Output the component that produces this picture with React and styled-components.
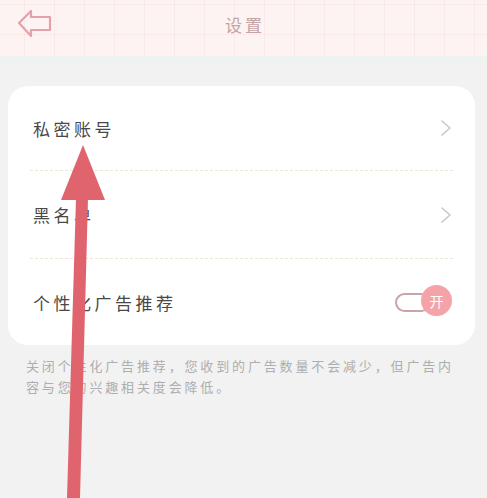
import React from "react";
import styled, { createGlobalStyle } from "styled-components";

const Global = createGlobalStyle`
  html, body { margin: 0; padding: 0; background: #f2f2f2; }
  body { font-family: "Noto Sans CJK SC", "Noto Sans", sans-serif; }
`;

const Page = styled.div`
  position: relative;
  width: 487px;
  height: 498px;
  overflow: hidden;
  background: #f2f2f2;
`;

const Header = styled.header`
  height: 56px;
  box-sizing: border-box;
  padding-bottom: 8px;
  display: grid;
  grid-template-columns: 60px 1fr 60px;
  align-items: center;
  background-color: #fdf3f2;
  background-image:
    linear-gradient(to right, rgba(240, 215, 212, 0.3) 1px, transparent 1px),
    linear-gradient(to bottom, rgba(240, 215, 212, 0.3) 1px, transparent 1px);
  background-size: 30px 30px;
  background-position: 24px 4px;
`;

const BackBtn = styled.div`
  display: flex;
  align-items: center;
  padding-left: 17px;
`;

const Title = styled.h1`
  margin: 0;
  text-align: center;
  font-size: 17px;
  font-weight: 400;
  letter-spacing: 3px;
  color: #c4a3a4;
  padding-left: 3px;
`;

const Strip = styled.div`
  height: 6px;
  background: #eff3f0;
`;

const Content = styled.main`
  padding: 24px 12px 0 8px;
`;

const Card = styled.section`
  background: #fff;
  border-radius: 20px;
  padding: 0 22px 0 22px;
`;

const Row = styled.div`
  height: ${(p) => p.$h}px;
  display: flex;
  align-items: center;
  justify-content: space-between;
  padding-left: 3px;
  border-bottom: ${(p) => (p.$last ? "none" : "1px dashed #efe6cf")};
`;

const Label = styled.span`
  font-size: 17px;
  letter-spacing: 3.5px;
  color: #484848;
`;

const Note = styled.p`
  margin: 10px 20px 0 18px;
  font-size: 13px;
  line-height: 21px;
  letter-spacing: 2.85px;
  color: #aeaeae;
`;

const Toggle = styled.div`
  position: relative;
  width: 58px;
  height: 30px;
  display: flex;
  align-items: center;
`;

const Track = styled.div`
  width: 36px;
  height: 19px;
  border: 2px solid #c9a4a8;
  border-radius: 12px;
  box-sizing: border-box;
`;

const Knob = styled.div`
  position: absolute;
  right: 1px;
  top: -2px;
  width: 31px;
  height: 31px;
  border-radius: 50%;
  background: #f4a4a8;
  color: #fff;
  font-size: 14px;
  display: flex;
  align-items: center;
  justify-content: center;
`;

const Overlay = styled.svg`
  position: absolute;
  left: 0;
  top: 0;
  pointer-events: none;
`;

const Chevron = () => (
  <svg width="14" height="18" viewBox="0 0 14 18">
    <path d="M3 2 L11 9 L3 16" fill="none" stroke="#c8c8c8" strokeWidth="1.6" strokeLinecap="round" strokeLinejoin="round" />
  </svg>
);

const BackIcon = () => (
  <svg width="36" height="30" viewBox="0 0 36 30">
    <path
      d="M2 14 L14 2 L14 8 L33 8 L33 21 L14 21 L14 27 Z"
      fill="none"
      stroke="#e2a2aa"
      strokeWidth="2.2"
      strokeLinejoin="round"
    />
  </svg>
);

export default function App() {
  return (
    <>
      <Global />
      <Page>
        <Header>
          <BackBtn>
            <BackIcon />
          </BackBtn>
          <Title>设置</Title>
          <div />
        </Header>
        <Strip />
        <Content>
          <Card>
            <Row $h={84}>
              <Label>私密账号</Label>
              <Chevron />
            </Row>
            <Row $h={87}>
              <Label>黑名单</Label>
              <Chevron />
            </Row>
            <Row $h={86} $last>
              <Label>个性化广告推荐</Label>
              <Toggle>
                <Track />
                <Knob>开</Knob>
              </Toggle>
            </Row>
          </Card>
          <Note>关闭个性化广告推荐，您收到的广告数量不会减少，但广告内容与您的兴趣相关度会降低。</Note>
        </Content>
        <Overlay width="487" height="498" viewBox="0 0 487 498">
          <polygon points="67,498 80,498 88,198 76,198" fill="#e0646e" />
          <polygon points="83,145 61,200 105,200" fill="#e0646e" />
        </Overlay>
      </Page>
    </>
  );
}
